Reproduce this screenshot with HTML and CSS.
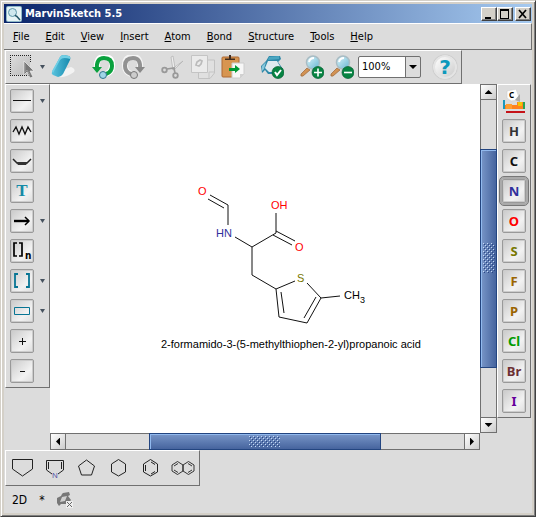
FILE: index.html
```html
<!DOCTYPE html>
<html lang="en">
<head>
<meta charset="utf-8">
<title>MarvinSketch 5.5</title>
<link rel="stylesheet" href="styles.css">
</head>
<body>
<svg class="defs" width="0" height="0" aria-hidden="true">
  <defs>
    <linearGradient id="glass" x1="0" y1="0" x2="1" y2="1"><stop offset="0" stop-color="#dff6fc"/><stop offset="1" stop-color="#65b5d2"/></linearGradient>
    <linearGradient id="teal" x1="0" y1="0" x2="1" y2="0"><stop offset="0" stop-color="#5bc4df"/><stop offset="1" stop-color="#168aae"/></linearGradient>
    <linearGradient id="soft" x1="0" y1="0" x2="1" y2="1"><stop offset="0" stop-color="#dcdcdc"/><stop offset="1" stop-color="#bbb"/></linearGradient>
    <pattern id="dots" width="4" height="4" patternUnits="userSpaceOnUse"><path d="M0 0h1v1H0zM2 2h1v1H2z" fill="#c3d8f5"/><path d="M1 1h1v1H1zM3 3h1v1H3z" fill="#2a4684"/></pattern>
    <g id="lens">
      <path d="M1 19L7 13L10 15L3 21Q0 22 1 19Z" fill="#d29253" stroke="#9a6437" stroke-width=".7"/>
      <circle cx="13" cy="7.500" r="6.500" fill="url(#glass)" stroke="#a9bcc4" stroke-width="1.500"/>
      <path d="M9 7Q10 3 14 3" stroke="#fff" stroke-width="2" fill="none"/>
      <circle cx="18" cy="17.500" r="6" fill="#078342" stroke="#045e31" stroke-width=".7"/>
    </g>
  </defs>
</svg>
<div class="window">
  <header class="title">
    <svg class="logo" width="16" height="16" viewBox="0 0 16 16"><rect width="16" height="16" rx="2" fill="#8fb9c8"/><rect x="1" y="1" width="14" height="14" rx="1" fill="#e7f4f5"/><circle cx="6.500" cy="6.500" r="4" fill="#cfe8ee" stroke="#5f98aa"/><path d="M9 9L10.500 10.500M10.500 10L14 14" stroke="#235568" stroke-width="1.500"/></svg>
    <h1>MarvinSketch 5.5</h1>
    <button class="wb" aria-label="Minimize"><svg width="14" height="12"><path d="M3 9h6v2H3z"/></svg></button>
    <button class="wb" aria-label="Maximize"><svg width="14" height="12"><path d="M2 1h9v10H2zM3 3v7h7V3z" fill-rule="evenodd"/></svg></button>
    <button class="wb close" aria-label="Close"><svg width="14" height="12"><path d="M3 2L10 10M10 2L3 10" stroke="#000" stroke-width="1.7"/></svg></button>
  </header>
  <nav class="menu">
    <button><u>F</u>ile</button><button><u>E</u>dit</button><button><u>V</u>iew</button><button><u>I</u>nsert</button><button><u>A</u>tom</button><button><u>B</u>ond</button><button><u>S</u>tructure</button><button><u>T</u>ools</button><button><u>H</u>elp</button>
  </nav>
  <div class="bar tools">
    <button class="tool" aria-label="Select"><svg viewBox="0 0 24 24"><rect x="1" y="1" width="19" height="19" fill="url(#soft)"/><path d="M0 .5H21M0 20.500H21M.5 0V21M20.500 0V7" fill="none" stroke="#222" stroke-dasharray="1 1" shape-rendering="crispEdges"/><path d="M14 6V20L17 17L20 23L23 22L20 16H24Z" fill="#777" stroke="#eee" stroke-width=".7"/><path d="M15 9V17L17 15L20 20" fill="none" stroke="#999"/></svg></button>
    <button class="drop" aria-label="Selection modes"></button>
    <button class="tool eraser" aria-label="Erase"><svg viewBox="0 0 24 24"><path d="M8 22Q15 23 23 17Q25 14 20 12L14 14Z" fill="#f3f3f3"/><path d="M9 2Q10 0 13 0L18 1Q20 2 19 5L12 19Q10 22 7 22L2 20Q0 19 1 17Z" fill="url(#teal)"/><path d="M1 16L9 2Q10 0 13 0L18 1Q20 2 19 4Q10 1 8 7L2 18Z" fill="#71cfe5"/></svg></button>
    <button class="tool undo" aria-label="Undo"><svg viewBox="0 0 24 24"><path d="M5 13Q4 2 12 2Q21 2 20 11Q20 17 14 19" fill="none" stroke="#fff" stroke-width="6"/><path d="M5 14Q4 3 12 3Q20 3 20 11Q20 17 14 19" fill="none" stroke="#0aa13e" stroke-width="4"/><path d="M0 12H10L5 18Z" fill="#0aa13e"/><circle cx="11" cy="20" r="3.5" fill="#a0d6e7" stroke="#32758e"/></svg></button>
    <button class="tool redo" aria-label="Redo"><svg viewBox="0 0 24 24"><path d="M19 13Q20 2 12 2Q3 2 4 11Q4 17 10 19" fill="none" stroke="#f4f4f4" stroke-width="6"/><path d="M19 14Q20 3 12 3Q4 3 4 11Q4 17 10 19" fill="none" stroke="#929292" stroke-width="4"/><path d="M24 12H14L19 18Z" fill="#888"/><circle cx="13" cy="20" r="3.5" fill="#ccc" stroke="#777"/></svg></button>
    <button class="tool cut" aria-label="Cut"><svg viewBox="0 0 24 24"><path d="M10 2L12 1L14 13L12 15ZM22 6L13 15L11 14Z" fill="#eee" stroke="#b5b5b5" stroke-width=".8"/><circle cx="3.500" cy="15" r="2.300" fill="none" stroke="#999" stroke-width="1.800"/><circle cx="14.500" cy="20.500" r="2.300" fill="none" stroke="#999" stroke-width="1.800"/><path d="M6 14L13 13L14 18" stroke="#999" fill="none" stroke-width="1.600"/></svg></button>
    <button class="tool copy" aria-label="Copy"><svg viewBox="0 0 24 24"><path d="M11 5H23.500V18L19 23.500H7.500V17" fill="#e0e0e0" stroke="#c2c2c2"/><path d="M.5 .5H16.500V17.500H.5Z" fill="#ebebeb" stroke="#c4c4c4"/><path d="M6 7L9 5L11 6L10 9L8 11L5 10Z" fill="none" stroke="#bbb" stroke-width="1.700"/><path d="M18 23V17H24" fill="none" stroke="#c4c4c4"/></svg></button>
    <button class="tool paste" aria-label="Paste"><svg viewBox="0 0 24 24"><rect x="1" y="2" width="17" height="20" rx="1" fill="#d79550" stroke="#ad6832"/><path d="M4 5V3.500H8V0H10V3.500H14V5Z" fill="#412c1e"/><path d="M11 8H23V19L19 23H11Z" fill="#f7f7f7" stroke="#ccc"/><path d="M8 13H14V10L19 14L14 18V16H8Z" fill="#009933"/><path d="M19 23V19H23" fill="#d1d1d1"/></svg></button>
    <button class="tool clean" aria-label="Clean structure"><svg viewBox="0 0 24 24"><path d="M9 1L20 1L21 4L18 7L23 14L19 19L8 19L5 15L2 18L1 11L6 6Z" fill="#2e88a8"/><path d="M9 2L19 1L19 4L8 5Z" fill="#4ba6c1"/><path d="M8 6L17 6L21 13L17 17L9 17L5 13Z" fill="#deeaef"/><path d="M2 11L6 7L4 14L2 16Z" fill="#86c8dd"/><circle cx="18" cy="17.500" r="6" fill="#078342" stroke="#045e31" stroke-width=".7"/><path d="M15 17L17 20L21 15" stroke="#fff" stroke-width="2" fill="none"/></svg></button>
    <button class="tool zin" aria-label="Zoom in"><svg viewBox="0 0 24 24"><use href="#lens"/><path d="M14 17.500H22M18 13.500V21.500" stroke="#fff" stroke-width="1.600"/></svg></button>
    <button class="tool zout" aria-label="Zoom out"><svg viewBox="0 0 24 24"><use href="#lens"/><path d="M14 17.500H22" stroke="#fff" stroke-width="1.600"/></svg></button>
    <div class="combo"><select aria-label="Zoom level"><option>100%</option></select></div>
    <button class="help" aria-label="Help">?</button>
  </div>
  <main class="work">
    <aside class="side">
      <div class="bar left">
        <button class="key" aria-label="Single bond"><svg viewBox="0 0 20 20"><path d="M1 9.5H19" stroke="#111"/></svg></button><button class="drop" aria-label="Bond types"></button>
        <button class="key" aria-label="Chain"><svg viewBox="0 0 20 20"><path d="M1 11L4 6L7 13L10 6L13 13L16 6L19 11" stroke="#111" stroke-width="1.3" fill="none"/></svg></button>
        <button class="key" aria-label="Bold bond"><svg viewBox="0 0 20 20"><path d="M1 8L5 12H15L19 8" stroke="#222" stroke-width="1.5" fill="none"/><path d="M4 11H16L14 14H6Z" fill="#333"/></svg></button>
        <button class="key text" aria-label="Text">T</button>
        <button class="key" aria-label="Arrow"><svg viewBox="0 0 20 20"><path d="M2 10H17" stroke="#000" stroke-width="2.4"/><path d="M13 6L17 10L13 14" stroke="#000" stroke-width="1.5" fill="none"/></svg></button><button class="drop" aria-label="Arrow types"></button>
        <button class="key" aria-label="Repeating group"><svg viewBox="0 0 20 20"><path d="M5 2H2V15H5M7 2H10V15H7" fill="none" stroke="#000" stroke-width="1.7"/><text x="13" y="18" class="sub">n</text></svg></button>
        <button class="key" aria-label="Brackets"><svg viewBox="0 0 20 20"><path d="M6 3H3V16H6M14 3H17V16H14" fill="none" stroke="#087594" stroke-width="1.8"/></svg></button><button class="drop" aria-label="Bracket types"></button>
        <button class="key" aria-label="Rectangle"><svg viewBox="0 0 20 20"><path d="M2.5 6.5H17.5V13.5H2.5Z" fill="none" stroke="#087594"/></svg></button><button class="drop" aria-label="Shape types"></button>
        <button class="key" aria-label="Increase charge"><svg viewBox="0 0 20 20"><path d="M7 10.5H14M10.500 7V14" stroke="#111"/></svg></button>
        <button class="key" aria-label="Decrease charge"><svg viewBox="0 0 20 20"><path d="M8 10.5H13" stroke="#111"/></svg></button>
      </div>
    </aside>
    <section class="canvas">
      <svg viewBox="0 1 430 349" role="img" aria-label="Molecule">
        <g fill="none" stroke="#111" stroke-width="1">
          <path d="M160 112L178 122V142M158 116L174 125M185 154L202 164L226 150V130M202 164V192L226 206L245 198M226 148L245 158M223 152L242 162M226 206L229 234L257 240L271 215L257 200M231 209L234 230M254 235L266 214M271 215L290 213"/>
        </g>
        <g class="atoms"><text x="148" y="112" class="oxy">O</text><text x="221" y="126" class="oxy">OH</text><text x="245" y="168" class="oxy">O</text><text x="166" y="154" class="nit">HN</text><text x="247" y="199" class="sul">S</text><text x="294" y="216">CH<tspan class="small" dy="4">3</tspan></text><text x="111" y="265">2-formamido-3-(5-methylthiophen-2-yl)propanoic acid</text></g>
      </svg>
    </section>
    <div class="vs">
      <button class="up" aria-label="Scroll up"></button><i class="track a"></i><div class="thumb"><svg width="12" height="30"><rect width="12" height="30" fill="url(#dots)"/></svg></div><i class="track b"></i><button class="down" aria-label="Scroll down"></button>
    </div>
    <aside class="elements">
      <div class="bar right">
        <button class="periodic" aria-label="Periodic table"><svg viewBox="0 0 24 26"><path d="M5 2L14 0L18 11L9 12L5 9Z" fill="#fff" stroke="#ccc" stroke-width=".6"/><text x="7" y="9" class="cell">C</text><path d="M13 11L18 5L18 13Z" fill="#aaa"/><path d="M1 11H3V16H15V13H23V20H1Z" fill="#ff821d"/><path d="M1 11H3V20H1Z" fill="#1998bd"/><path d="M4 15H10V20H4Z" fill="#ff9d30"/><path d="M16 13H20V17H16Z" fill="#f2c500"/><path d="M21 13H23V20H21Z" fill="#27a451"/><path d="M4 22H23V24H4Z" fill="#c51218"/></svg></button>
        <button class="key h">H</button><button class="key c">C</button><button class="key n" aria-pressed="true">N</button><button class="key o">O</button><button class="key s">S</button><button class="key f">F</button><button class="key f">P</button><button class="key cl">Cl</button><button class="key br">Br</button><button class="key io">I</button>
      </div>
    </aside>
    <div class="hs">
      <button class="prev" aria-label="Scroll left"></button><i class="track a"></i><div class="thumb"><svg width="31" height="11"><rect width="31" height="11" fill="url(#dots)"/></svg></div><i class="track b"></i><button class="next" aria-label="Scroll right"></button>
    </div>
  </main>
  <div class="bar templates">
    <button aria-label="Cyclopentane, flat top"><svg viewBox="0 0 26 22"><path d="M2.500 2.500H22.500V12L12.500 19L2.500 12Z"/></svg></button>
    <button aria-label="Pyrrole"><svg viewBox="0 0 26 22"><path d="M10 17L4.500 13V3.500H21.500V13L16 17M6.500 5V12M19.500 5V12"/><text x="10" y="21">N</text></svg></button>
    <button aria-label="Cyclopentane"><svg viewBox="0 0 26 22"><path d="M12.500 3L20.500 9L17.500 18H7.500L4.500 9Z"/></svg></button>
    <button aria-label="Cyclohexane"><svg viewBox="0 0 26 22"><path d="M12.500 2.500L19.500 7V15L12.500 19L5.500 15V7Z"/></svg></button>
    <button aria-label="Benzene"><svg viewBox="0 0 26 22"><path d="M12.500 2.500L19.500 7V15L12.500 19L5.500 15V7ZM7.500 8V14M13 5L17 7.500M17 14.500L13 17"/></svg></button>
    <button aria-label="Naphthalene"><svg viewBox="0 0 26 22"><g stroke-width=".9"><path d="M7.500 4.500L13 8V14L7.500 17.500L2 14V8ZM18.500 4.500L24 8V14L18.500 17.500L13 14V8Z"/><path d="M4 9L8 6.500M4 13L8 15.500M18 6.500L22 9M18 15.500L22 13"/></g></svg></button>
  </div>
  <footer class="status"><span>2D</span><span>*</span><svg width="16" height="16" viewBox="0 0 16 16"><path d="M5 2L6 1L12 0L13 3L11 4L14 8L11 12L4 12L2 14L0 11V6L4 4Z" fill="#777"/><path d="M5 5L10 4L8 9L3 10Z" fill="#d0d0d0"/><path d="M9 9H16V16H9Z" fill="#eee"/><path d="M10 10L15 15M15 10L10 15" stroke="#666"/></svg></footer>
</div>
</body>
</html>
```
FILE: styles.css
```css
* { box-sizing: border-box; }
body { margin: 0; background: #d4d0c8; color: #000; font: 12px/14px "Noto Sans", sans-serif; }
button { appearance: none; margin: 0; padding: 0; border: 0; background: none; color: inherit; font: inherit; }
svg { display: block; }
.defs { position: absolute; }
.window { display: flex; flex-direction: column; min-height: 100vh; padding: 3px; border: 1px solid; border-color: #d4d0c8 #404040 #404040 #d4d0c8; box-shadow: inset 1px 1px #fff, inset -1px -1px #808080; background: linear-gradient(#dcdcdc, #dcdcdc) content-box, #d4d0c8; }
.title { display: flex; align-items: center; height: 19px; padding: 0 1px 0 2px; background: linear-gradient(90deg, #0a246a, #a6caf0); color: #fff; }
h1 { flex: 1; margin: 0 0 0 3px; font: bold 11px/16px "DejaVu Sans Condensed", "DejaVu Sans", sans-serif; }
.wb { width: 16px; height: 14px; background: #d4d0c8; border: 1px solid; border-color: #fff #404040 #404040 #fff; box-shadow: inset -1px -1px #808080; }
.close { margin-left: 2px; }
.menu { display: flex; gap: 16px; height: 27px; padding: 0 9px; border-top: 1px solid #fff; border-bottom: 1px solid #707070; border-right: 1px solid #707070; font-family: "DejaVu Sans Condensed", "DejaVu Sans", sans-serif; font-size: 11px; }
.menu u { text-underline-offset: 1px; }
.bar { background: #dcdcdc; border: 1px solid; border-color: #fff #707070 #707070 #fff; }
.tools { display: flex; align-items: center; align-self: flex-start; height: 34px; margin-left: 1px; padding: 0 4px; }
.tool { flex: none; width: 24px; height: 24px; }
.tool svg { width: 24px; height: 24px; }
.drop { width: 5px; height: 4px; background: #46515e; clip-path: polygon(0 0, 100% 0, 50% 100%); }
.tools .drop { margin-left: 6px; }
.eraser { margin-left: 6px; }
.undo { margin-left: 17px; }
.cut { margin-left: 16px; }
.redo { margin-left: 5px; }
.copy, .paste, .zout { margin-left: 6px; }
.clean { margin-left: 15px; }
.zin { margin-left: 16px; }
.combo { position: relative; width: 63px; height: 22px; margin-left: 4px; }
.combo select { appearance: none; width: 100%; height: 100%; padding: 0 3px; border: 1px solid #707070; border-radius: 2px; background: linear-gradient(90deg, #fff 46px, #707070 46px, #707070 47px, #dcdcdc 47px); color: #000; font: 11px/14px "DejaVu Sans Condensed", sans-serif; }
.combo::after { content: ""; position: absolute; right: 4px; top: 9px; border: 4px solid transparent; border-top-color: #000; border-bottom: 0; }
.help { width: 24px; height: 24px; margin-left: 12px; border: 2px solid #e4e4e4; border-radius: 50%; background: linear-gradient(135deg, #fff, #ccc); box-shadow: 0 0 1px #888; color: #0c99bc; font: bold 20px/20px "DejaVu Sans", sans-serif; }
.work { display: grid; flex: 1; grid-template-columns: 45px minmax(0, 1fr) 17px 35px; grid-template-rows: minmax(349px, 1fr) 17px; margin-left: 1px; }
.left { display: grid; grid-template-columns: 24px 5px; grid-auto-rows: 24px; gap: 6px; align-items: center; padding: 4px; }
.left .key { grid-column: 1; }
.key { width: 24px; height: 24px; border: 1px solid #999; border-radius: 2px; background: linear-gradient(135deg, #c9c9c9, #f2f2f2 65%, #ddd); box-shadow: inset 0 0 0 1px #ccc; font: bold 13px/20px "Noto Sans", sans-serif; }
.key svg { width: 20px; height: 20px; margin: auto; overflow: visible; }
.text { color: #168aa6; font: bold 17px/20px "Liberation Serif", serif; }
.sub { font: bold 10px "DejaVu Sans Condensed", sans-serif; }
.canvas { min-width: 0; background: #fff; }
.canvas svg { width: 100%; height: 100%; }
.atoms { font: 11px "Liberation Sans", sans-serif; }
.oxy { fill: #f00; } .nit { fill: #30309c; } .sul { fill: #777700; }
.small { font-size: 9px; }
.vs, .hs { display: flex; background: #dcdcdc; }
.vs { flex-direction: column; }
.hs { grid-column: 2; }
.vs button, .hs button { position: relative; flex: 0 0 16px; border: 1px solid #707070; background: linear-gradient(135deg, #fff, #ccc); }
.vs button::after, .hs button::after { content: ""; display: block; width: 8px; height: 4px; margin: auto; background: #000; clip-path: polygon(50% 0, 100% 100%, 0 100%); }
.vs .down::after { clip-path: polygon(0 0, 100% 0, 50% 100%); }
.hs button::after { width: 4px; height: 8px; clip-path: polygon(0 50%, 100% 0, 100% 100%); }
.hs .next::after { clip-path: polygon(0 0, 100% 50%, 0 100%); }
.thumb { display: flex; align-items: center; justify-content: center; border: 1px solid #234580; box-shadow: inset 1px 1px #91b9ee; }
.vs .thumb { flex: 220; background: linear-gradient(90deg, #7896c8, #46649e); }
.hs .thumb { flex: 232; background: linear-gradient(#7896c8, #46649e); }
.vs .track { border: solid #707070; border-width: 0 1px; }
.hs .track { border: solid #707070; border-width: 1px 0; }
.vs .track { flex: 49; }
.hs .track { flex: 83; }
.right { display: grid; gap: 6px; width: 34px; grid-auto-rows: 24px; padding: 4px; }
.periodic svg { width: 24px; height: 26px; }
.cell { font: bold 8px "Noto Sans", sans-serif; }
.h { color: #333; } .c { color: #111; } .o { color: #f00; } .s { color: #777700; } .f { color: #9b6400; } .cl { color: #009b00; } .br { color: #6c3034; } .io { color: #65009b; }
.n { color: #30309c; outline: 1px solid #777; outline-offset: 2px; box-shadow: inset 0 0 0 1px #ccc, 0 0 0 2px #aaa; }
.templates { display: flex; align-self: flex-start; gap: 6px; height: 36px; margin-left: 1px; padding: 6px 3px 6px 4px; }
.templates svg { width: 26px; height: 22px; fill: none; stroke: #222; }
.templates text { fill: #5555a8; stroke: none; font: 8px "Liberation Sans", sans-serif; }
.status { display: flex; align-items: center; gap: 12px; height: 27px; padding: 0 8px; }
.status span { font: 12px/14px "DejaVu Sans Condensed", sans-serif; }
```
